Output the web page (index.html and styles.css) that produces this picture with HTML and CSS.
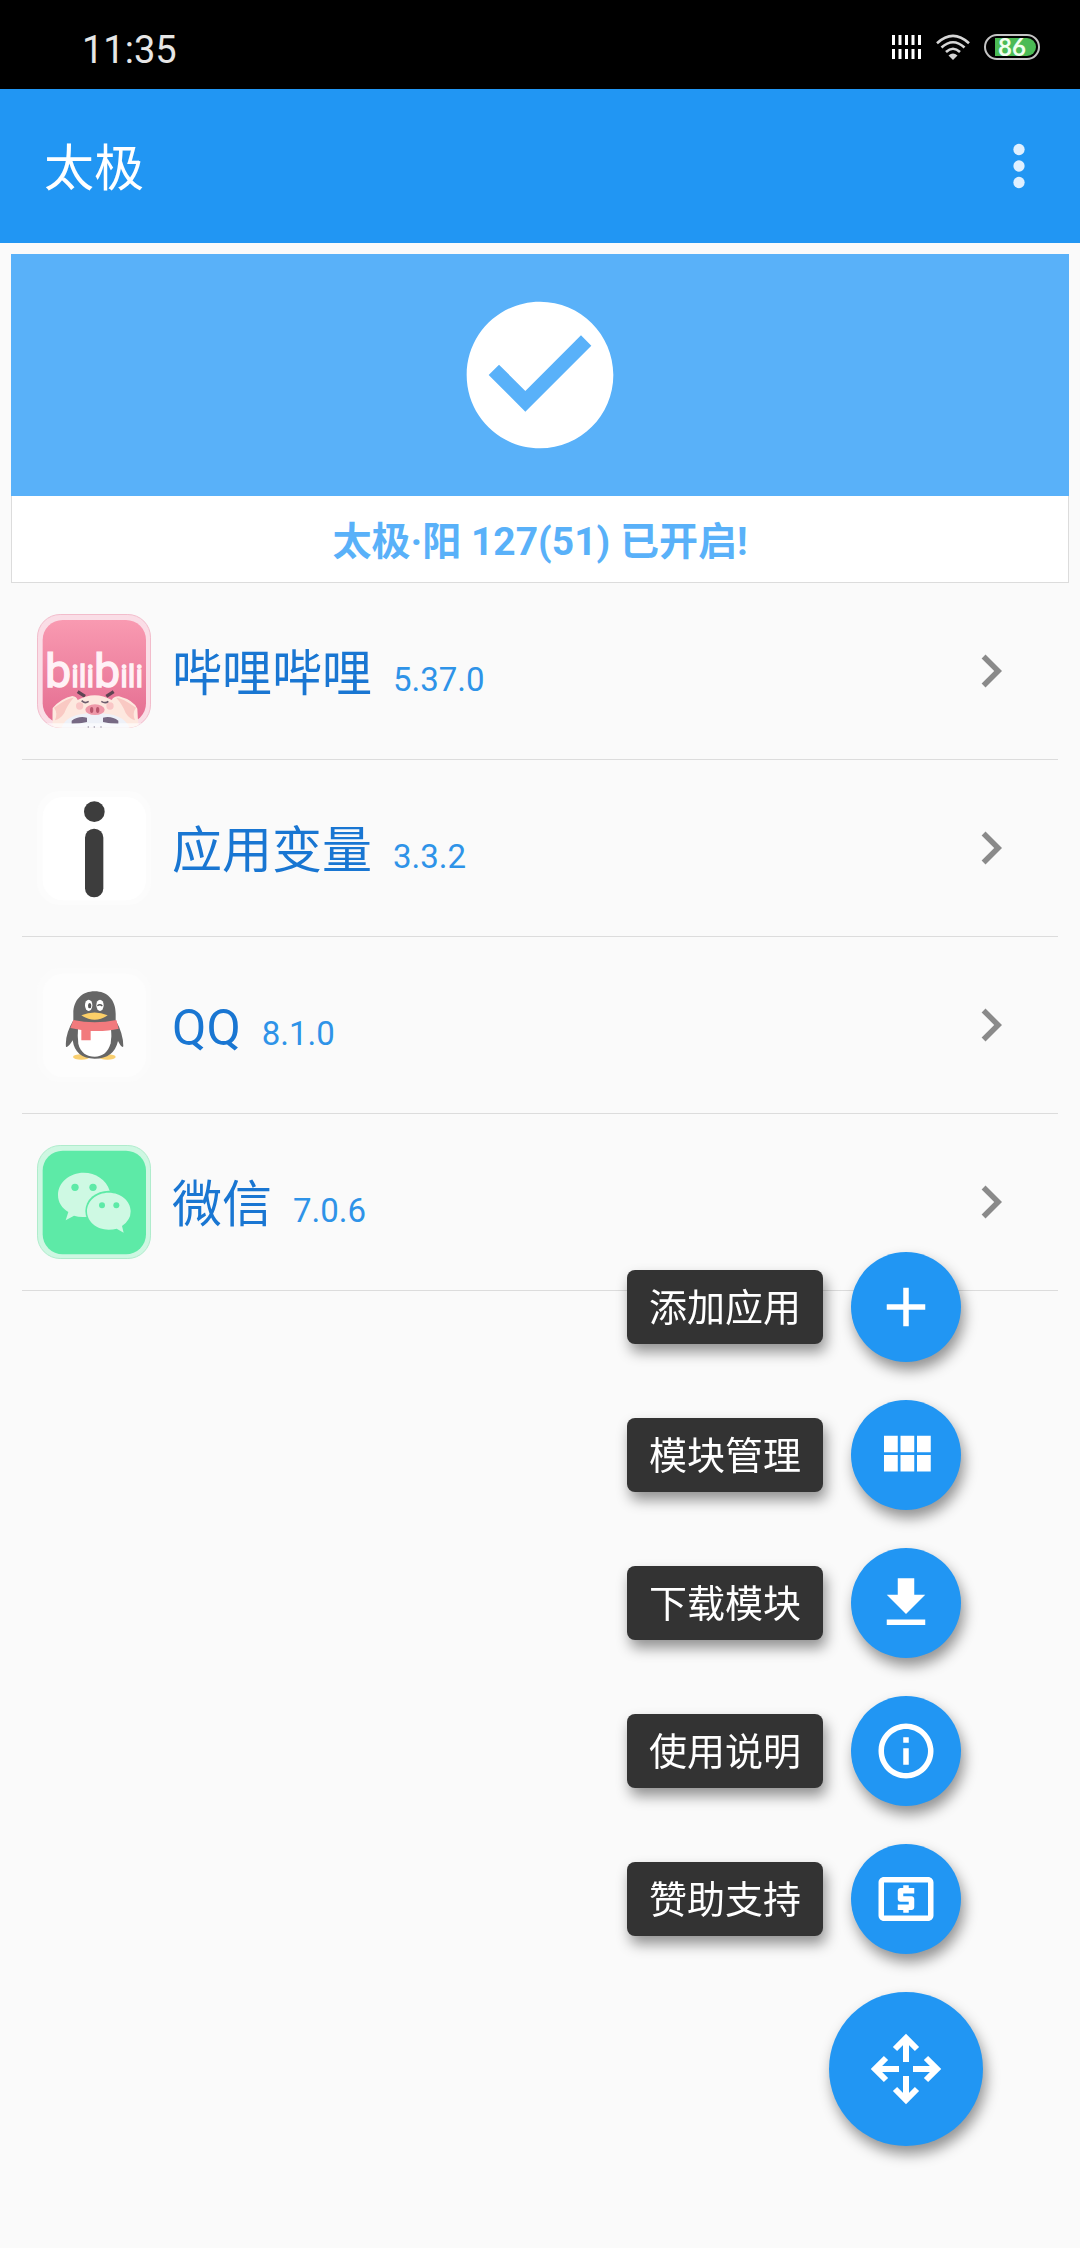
FILE: index.html
```html
<!DOCTYPE html>
<html lang="zh-CN">
<head>
<meta charset="utf-8">
<meta name="viewport" content="width=device-width, initial-scale=1">
<title>太极</title>
<link rel="stylesheet" href="styles.css">
</head>
<body>
<div class="status-bar">
  <time class="clock">11:35</time>
  <div class="status-icons">
    <svg class="signal" viewBox="0 0 30 24" aria-hidden="true"><path d="M1.500 0v10M8 0v10M14.500 0v10M21 0v10M27.500 0v10M1.500 14v10M8 14v10M14.500 14v10M21 14v10M27.500 14v10" stroke="#fff" stroke-width="3"/></svg>
    <svg class="wifi" viewBox="0 0 34 26" aria-hidden="true"><g fill="none" stroke="#d6d6d6" stroke-width="2.600"><path d="M1 9.200Q17 -5.500 33 9.200"/><path d="M5.500 13.500Q17 3 28.500 13.500"/><path d="M10 18Q17 11.500 24 18"/></g><path d="M12.500 21.500Q17 17.500 21.500 21.500L17 26z" fill="#d6d6d6"/></svg>
    <div class="battery"><span class="battery-level">86</span></div>
  </div>
</div>
<header class="app-bar">
  <h1 class="app-title">太极</h1>
  <button class="menu-button" type="button" aria-label="更多选项">
    <svg viewBox="0 0 24 24" aria-hidden="true"><circle cx="12" cy="6" r="2.050"/><circle cx="12" cy="12" r="2.050"/><circle cx="12" cy="18" r="2.050"/></svg>
  </button>
</header>
<main>
  <section class="status-card">
    <div class="status-banner">
      <svg viewBox="0 0 24 24" aria-hidden="true"><path d="M12 2C6.480 2 2 6.480 2 12s4.480 10 10 10 10-4.480 10-10S17.520 2 12 2zm-2 15l-5-5 1.410-1.410L10 14.170l7.590-7.590L19 8l-9 9z"/></svg>
    </div>
    <p class="status-text">太极·阳 127(51) 已开启!</p>
  </section>
  <ul class="app-list">
    <li class="app-item"><a class="app-link" href="#bilibili">
      <svg class="app-icon" viewBox="110 100 342 342" aria-hidden="true">
        <defs>
          <linearGradient id="pink" x1="0" y1="0" x2="0" y2="1"><stop offset="0" stop-color="#f99ab1"/><stop offset="1" stop-color="#e46d91"/></linearGradient>
          <clipPath id="tile"><rect x="111" y="101" width="340" height="340" rx="68"/></clipPath>
        </defs>
        <rect x="111.500" y="101.500" width="339" height="339" rx="68" fill="#fadde6" stroke="#f2bccb" stroke-width="3"/>
        <rect x="127" y="118" width="310" height="310" rx="60" fill="url(#pink)"/>
        <text class="logo-text" x="134" y="318"><tspan class="logo-big">b</tspan><tspan class="logo-small">ili</tspan><tspan class="logo-big">b</tspan><tspan class="logo-small">ili</tspan></text>
        <g clip-path="url(#tile)">
          <path d="M232 333l22 14M340 333l-22 14" stroke="#5d4452" stroke-width="10"/>
          <path d="M157 442Q156 405 157 382Q184 352 216 346Q229 348 232 358Q284 330 334 358Q341 346 356 347Q400 359 411 384Q412 408 415 442z" fill="#fde8df"/>
          <path d="M161 381Q204 350 220 351Q200 374 192 397Q181 414 164 419Q173 397 161 381zM407 381Q364 350 348 351Q368 374 376 397Q387 414 404 419Q395 397 407 381z" fill="#f9c9c3"/>
          <path d="M183 442Q197 397 284 397Q371 397 388 442z" fill="#eef1f8"/>
          <ellipse cx="284" cy="387" rx="29" ry="16" fill="#ee98a8"/>
          <ellipse cx="274" cy="388" rx="5" ry="9" fill="#b9566c"/><ellipse cx="292" cy="388" rx="5" ry="9" fill="#b9566c"/>
          <circle cx="238" cy="376" r="11" fill="#f9c6c6"/><circle cx="329" cy="376" r="11" fill="#f9c6c6"/>
          <path d="M244 360q9 10 21 2M303 362q12 8 21 0" fill="none" stroke="#6d5c6c" stroke-width="5"/>
          <path d="M214 420q20-15 46-9v13q-24 6-46 6zM354 420q-20-15-46-9v13q24 6 46 6z" fill="#776984"/>
          <path d="M111 428h340v14H111z" fill="#fff" opacity=".65"/>
          <path d="M264 437v8M282 437v8M302 437v8" stroke="#a8a4b2" stroke-width="4"/>
        </g>
      </svg>
      <span class="app-label"><span class="app-name">哔哩哔哩</span><span class="app-version">5.37.0</span></span>
      <svg class="chevron" viewBox="0 0 24 24" aria-hidden="true"><path d="M10 6L8.590 7.410 13.170 12l-4.580 4.590L10 18l6-6z"/></svg>
    </a></li>
    <li class="app-item"><a class="app-link" href="#variable">
      <svg class="app-icon" viewBox="110 60 342 342" aria-hidden="true">
        <rect x="110" y="60" width="342" height="342" rx="68" fill="#fcfcfc"/>
        <rect x="127" y="78" width="310" height="310" rx="60" fill="#fff"/>
        <circle cx="282" cy="122" r="31" fill="#3d3d3d"/><rect x="254" y="173" width="55" height="206" rx="27" fill="#3d3d3d"/>
      </svg>
      <span class="app-label"><span class="app-name">应用变量</span><span class="app-version">3.3.2</span></span>
      <svg class="chevron" viewBox="0 0 24 24" aria-hidden="true"><path d="M10 6L8.590 7.410 13.170 12l-4.580 4.590L10 18l6-6z"/></svg>
    </a></li>
    <li class="app-item"><a class="app-link" href="#qq">
      <svg class="app-icon" viewBox="110 53 342 342" aria-hidden="true">
        <rect x="110" y="53" width="342" height="342" rx="68" fill="#fbfbfb"/>
        <rect x="127" y="70" width="310" height="310" rx="60" fill="#fdfdfd"/>
        <ellipse cx="243" cy="320" rx="25" ry="8" fill="#f9cf70"/><ellipse cx="321" cy="320" rx="25" ry="8" fill="#f9cf70"/>
        <path d="M219 210V190C219 148 246 123 283 123S346 148 346 190V210Q369 250 369 288Q365 295 353 272Q341 325 283 325T217 270Q204 292 197 290Q193 254 219 210z" fill="#666"/>
        <path d="M233 235H332Q335 258 331 279C323 307 306 319 283 319S240 307 234 280Q231 258 233 235z" fill="#fff"/>
        <path d="M219 209Q283 223 348 209L355 235Q319 244 271 242V270H243V239L210 233z" fill="#f27a7d"/>
        <ellipse cx="265" cy="165" rx="11" ry="17" fill="#fff"/><ellipse cx="299" cy="165" rx="11" ry="17" fill="#fff"/>
        <ellipse cx="268" cy="166" rx="5" ry="8" fill="#555"/><path d="M291 166q8-6 15 1" stroke="#555" stroke-width="4" fill="none"/>
        <path d="M243 195Q283 178 322 195Q304 208 283 208T243 195z" fill="#fbcf68"/>
      </svg>
      <span class="app-label"><span class="app-name">QQ</span><span class="app-version">8.1.0</span></span>
      <svg class="chevron" viewBox="0 0 24 24" aria-hidden="true"><path d="M10 6L8.590 7.410 13.170 12l-4.580 4.590L10 18l6-6z"/></svg>
    </a></li>
    <li class="app-item"><a class="app-link" href="#wechat">
      <svg class="app-icon" viewBox="110 103 342 342" aria-hidden="true">
        <rect x="111.500" y="104.500" width="339" height="339" rx="68" fill="#cef7e2" stroke="#afeccc" stroke-width="3"/>
        <rect x="127" y="120" width="310" height="311" rx="60" fill="#5deaa7"/>
        <path d="M250 186C208 186 173 215 173 253C173 275 185 293 204 304L196 329L221 315Q240 321 260 318L328 240C318 207 286 186 250 186z" fill="#cef9e3"/>
        <ellipse cx="325" cy="301" rx="70" ry="61" fill="#5deaa7"/>
        <path d="M325 246C288 246 260 271 260 302S288 357 325 357Q338 357 349 354L370 366L365 346Q391 329 391 302C391 271 362 246 325 246z" fill="#cef9e3"/>
        <g fill="#5deaa7"><circle cx="224" cy="230" r="11"/><circle cx="278" cy="230" r="11"/><circle cx="305" cy="284" r="9"/><circle cx="348" cy="284" r="9"/></g>
      </svg>
      <span class="app-label"><span class="app-name">微信</span><span class="app-version">7.0.6</span></span>
      <svg class="chevron" viewBox="0 0 24 24" aria-hidden="true"><path d="M10 6L8.590 7.410 13.170 12l-4.580 4.590L10 18l6-6z"/></svg>
    </a></li>
  </ul>
</main>
<nav class="fab-menu" aria-label="快捷操作">
  <button class="fab-action" type="button">
    <span class="fab-label">添加应用</span>
    <span class="fab fab-mini"><svg viewBox="0 0 24 24" aria-hidden="true"><path d="M19 13h-6v6h-2v-6H5v-2h6V5h2v6h6v2z"/></svg></span>
  </button>
  <button class="fab-action" type="button">
    <span class="fab-label">模块管理</span>
    <span class="fab fab-mini"><svg viewBox="0 0 24 24" aria-hidden="true"><path d="M4 11h5V5H4v6zm0 7h5v-6H4v6zm6 0h5v-6h-5v6zm6 0h5v-6h-5v6zm-6-7h5V5h-5v6zm6-6v6h5V5h-5z"/></svg></span>
  </button>
  <button class="fab-action" type="button">
    <span class="fab-label">下载模块</span>
    <span class="fab fab-mini"><svg viewBox="0 0 24 24" aria-hidden="true"><path d="M19 9h-4V3H9v6H5l7 7 7-7zM5 18v2h14v-2H5z"/></svg></span>
  </button>
  <button class="fab-action" type="button">
    <span class="fab-label">使用说明</span>
    <span class="fab fab-mini"><svg viewBox="0 0 24 24" aria-hidden="true"><path d="M11 17h2v-6h-2v6zm1-15C6.480 2 2 6.480 2 12s4.480 10 10 10 10-4.480 10-10S17.520 2 12 2zm0 18c-4.410 0-8-3.590-8-8s3.590-8 8-8 8 3.590 8 8-3.590 8-8 8zM11 9h2V7h-2v2z"/></svg></span>
  </button>
  <button class="fab-action" type="button">
    <span class="fab-label">赞助支持</span>
    <span class="fab fab-mini"><svg viewBox="0 0 24 24" aria-hidden="true"><path d="M11 17h2v-1h1c.55 0 1-.45 1-1v-3c0-.55-.45-1-1-1h-3v-1h4V8h-2V7h-2v1h-1c-.55 0-1 .45-1 1v3c0 .55.45 1 1 1h3v1H9v2h2v1zm9-13H4c-1.110 0-1.990.89-1.990 2L2 18c0 1.110.89 2 2 2h16c1.110 0 2-.89 2-2V6c0-1.110-.89-2-2-2zm0 14H4V6h16v12z"/></svg></span>
  </button>
  <button class="fab fab-main" type="button" aria-label="收起菜单">
    <svg viewBox="-36 -36 72 72" aria-hidden="true"><g fill="none" stroke="#fff" stroke-width="6"><path d="M0-7V-31M-11-20L0-31L11-20"/><path d="M0 7V31M-11 20L0 31L11 20"/><path d="M-7 0H-31M-20-11L-31 0L-20 11"/><path d="M7 0H31M20-11L31 0L20 11"/></g></svg>
  </button>
</nav>
</body>
</html>
```
FILE: styles.css
```css
* {
  box-sizing: border-box;
}

body {
  margin: 0;
  min-height: 100vh;
  background: #fafafa;
  font-family: Roboto, "Noto Sans CJK SC", sans-serif;
}

button {
  border: 0;
  padding: 0;
  background: none;
  font: inherit;
  cursor: pointer;
}

svg {
  display: block;
  flex: none;
}

/* System status bar */
.status-bar {
  display: flex;
  align-items: center;
  justify-content: space-between;
  height: 89px;
  padding: 4px 40px 0 82px;
  background: #000;
}

.clock {
  padding-top: 6px;
  color: #e6e6e6;
  font-size: 38px;
  line-height: 52px;
}

.status-icons {
  display: flex;
  align-items: center;
  gap: 14px;
}

.signal {
  width: 30px;
  height: 24px;
}

.wifi {
  width: 34px;
  height: 26px;
}

.battery {
  width: 56px;
  height: 26px;
  padding: 2px 2px 2px 9px;
  border: 2px solid #c4c4c4;
  border-radius: 13px;
}

.battery-level {
  display: block;
  height: 18px;
  padding-left: 3px;
  border-radius: 0 9px 9px 0;
  background: #4bbb55;
  color: #f0fff0;
  font: bold 24px/18px Lato, sans-serif;
}

/* App bar */
.app-bar {
  display: flex;
  align-items: center;
  justify-content: space-between;
  height: 154px;
  padding: 0 28px 0 44px;
  background: #2196f3;
}

.app-title {
  margin: 0;
  padding-top: 6px;
  color: #fff;
  font-size: 50px;
  font-weight: 400;
  line-height: 72px;
}

.menu-button svg {
  width: 66px;
  height: 66px;
  fill: #e0f0ff;
}

/* Activation status */
.status-card {
  margin: 11px 11px 0;
  border: solid #dcdcdc;
  border-width: 0 1px 1px;
  background: #fff;
}

.status-banner {
  display: flex;
  justify-content: center;
  margin: 0 -1px;
  padding: 33px 0;
  background: #59b1f9;
}

.status-banner svg {
  width: 176px;
  height: 176px;
  fill: #fff;
}

.status-text {
  margin: 0;
  padding: 18px 0 12px;
  color: #59b1f9;
  font-size: 39px;
  font-weight: 700;
  line-height: 56px;
  text-align: center;
}

/* Installed apps */
.app-list {
  margin: 0 22px;
  padding: 0;
  list-style: none;
}

.app-item {
  border-bottom: 1px solid #dcdcdc;
}

.app-link {
  display: flex;
  align-items: center;
  gap: 21px;
  padding: 31px 34px 31px 15px;
  text-decoration: none;
}

.app-icon {
  width: 114px;
  height: 114px;
}

.logo-text {
  fill: #fff2f6;
  stroke: #fff2f6;
  stroke-width: 4px;
}

.logo-big {
  font-size: 140px;
}

.logo-small {
  font-size: 94px;
}

.app-label {
  display: flex;
  flex: 1;
  align-items: baseline;
  gap: 21px;
  padding-top: 6px;
}

.app-name {
  color: #1976d2;
  font-size: 50px;
  line-height: 72px;
}

.app-version {
  color: #2e93e8;
  font-size: 33px;
}

.chevron {
  width: 66px;
  height: 66px;
  fill: #8a8a8a;
}

/* Floating action menu, laid over the list */
.fab-menu {
  position: fixed;
  right: 97px;
  bottom: 102px;
  display: flex;
  flex-direction: column;
  align-items: flex-end;
  gap: 38px;
}

.fab-action {
  display: flex;
  align-items: center;
  gap: 28px;
  margin-right: 22px;
}

.fab-label {
  padding: 9px 22px 7px;
  border-radius: 8px;
  background: #333;
  box-shadow: 3px 8px 14px rgba(0, 0, 0, .42);
  color: #fff;
  font-size: 38px;
  line-height: 58px;
}

.fab {
  display: flex;
  align-items: center;
  justify-content: center;
  border-radius: 50%;
  background: #2196f3;
  box-shadow: 3px 8px 14px rgba(0, 0, 0, .42);
}

.fab-mini {
  width: 110px;
  height: 110px;
}

.fab-mini svg {
  width: 66px;
  height: 66px;
  fill: #fff;
}

.fab-main {
  width: 154px;
  height: 154px;
}

.fab-main svg {
  width: 72px;
  height: 72px;
}
```
